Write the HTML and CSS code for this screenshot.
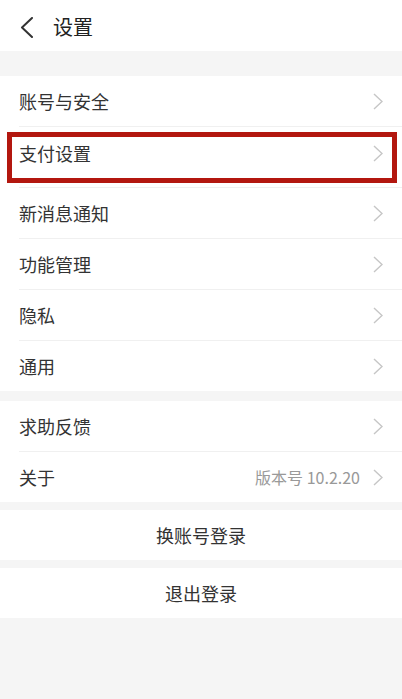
FILE: index.html
```html
<!DOCTYPE html>
<html lang="zh-CN">
<head>
<meta charset="utf-8">
<title>设置</title>
<link rel="stylesheet" href="styles.css">
</head>
<body>
<div class="page">
  <header class="topbar">
    <svg class="back" width="14" height="21" viewBox="0 0 14 21"><polyline points="12,1 2,10.5 12,20" fill="none" stroke="#333" stroke-width="2" stroke-linecap="round" stroke-linejoin="round"/></svg>
    <h1 class="title">设置</h1>
  </header>

  <section class="group group-first">
    <div class="row"><span class="label">账号与安全</span><svg class="chev" width="10" height="17" viewBox="0 0 10 17"><polyline points="1,1 9,8.5 1,16" fill="none" stroke="#c6c6c6" stroke-width="1.4"/></svg></div>
    <div class="row row-tall"><span class="label">支付设置</span><svg class="chev" width="10" height="17" viewBox="0 0 10 17"><polyline points="1,1 9,8.5 1,16" fill="none" stroke="#c6c6c6" stroke-width="1.4"/></svg><div class="highlight"></div></div>
    <div class="row"><span class="label">新消息通知</span><svg class="chev" width="10" height="17" viewBox="0 0 10 17"><polyline points="1,1 9,8.5 1,16" fill="none" stroke="#c6c6c6" stroke-width="1.4"/></svg></div>
    <div class="row"><span class="label">功能管理</span><svg class="chev" width="10" height="17" viewBox="0 0 10 17"><polyline points="1,1 9,8.5 1,16" fill="none" stroke="#c6c6c6" stroke-width="1.4"/></svg></div>
    <div class="row"><span class="label">隐私</span><svg class="chev" width="10" height="17" viewBox="0 0 10 17"><polyline points="1,1 9,8.5 1,16" fill="none" stroke="#c6c6c6" stroke-width="1.4"/></svg></div>
    <div class="row row-last"><span class="label">通用</span><svg class="chev" width="10" height="17" viewBox="0 0 10 17"><polyline points="1,1 9,8.5 1,16" fill="none" stroke="#c6c6c6" stroke-width="1.4"/></svg></div>
  </section>

  <section class="group">
    <div class="row"><span class="label">求助反馈</span><svg class="chev" width="10" height="17" viewBox="0 0 10 17"><polyline points="1,1 9,8.5 1,16" fill="none" stroke="#c6c6c6" stroke-width="1.4"/></svg></div>
    <div class="row row-last"><span class="label">关于</span><span class="value">版本号 10.2.20</span><svg class="chev" width="10" height="17" viewBox="0 0 10 17"><polyline points="1,1 9,8.5 1,16" fill="none" stroke="#c6c6c6" stroke-width="1.4"/></svg></div>
  </section>

  <section class="group group-small">
    <div class="button">换账号登录</div>
  </section>

  <section class="group group-small">
    <div class="button">退出登录</div>
  </section>
</div>
</body>
</html>
```

FILE: styles.css
```css
html, body {
  margin: 0;
  padding: 0;
  background: #f5f5f5;
}

body {
  font-family: "Noto Sans CJK SC", "Noto Sans", sans-serif;
  color: #333;
}

.page {
  width: 402px;
  min-height: 699px;
  background: #f5f5f5;
}

.topbar {
  height: 51px;
  box-sizing: border-box;
  padding-top: 4px;
  background: #fff;
  display: flex;
  align-items: center;
  padding-left: 20px;
  gap: 19px;
}

.back {
  display: block;
  flex: none;
}

.title {
  margin: 0;
  font-size: 20px;
  font-weight: 400;
  color: #222;
  line-height: 1;
  padding-bottom: 2px;
}

.group {
  background: #fff;
  margin-top: 10px;
  padding-left: 19px;
}

.group-first {
  margin-top: 25px;
}

.group-small {
  margin-top: 8px;
  padding-left: 0;
}

.row {
  position: relative;
  height: 50px;
  display: flex;
  align-items: center;
  border-bottom: 1px solid #f0f0f0;
  padding-right: 19px;
}

.row-tall {
  height: 60px;
  align-items: flex-start;
}

.row-tall .label {
  margin-top: 17px;
}

.row-tall .chev {
  margin-top: 18px;
}

.row-last {
  border-bottom: none;
}

.label {
  flex: 1;
  font-size: 18px;
  line-height: 1;
  color: #333;
}

.value {
  font-size: 16px;
  color: #999;
  line-height: 1;
  margin-right: 13px;
}

.chev {
  display: block;
  flex: none;
}

.highlight {
  position: absolute;
  top: 5px;
  left: -12px;
  right: 5px;
  height: 51px;
  box-sizing: border-box;
  border: 5px solid #b3170f;
  pointer-events: none;
}

.button {
  height: 50px;
  display: flex;
  align-items: center;
  justify-content: center;
  font-size: 18px;
  color: #333;
}
```
